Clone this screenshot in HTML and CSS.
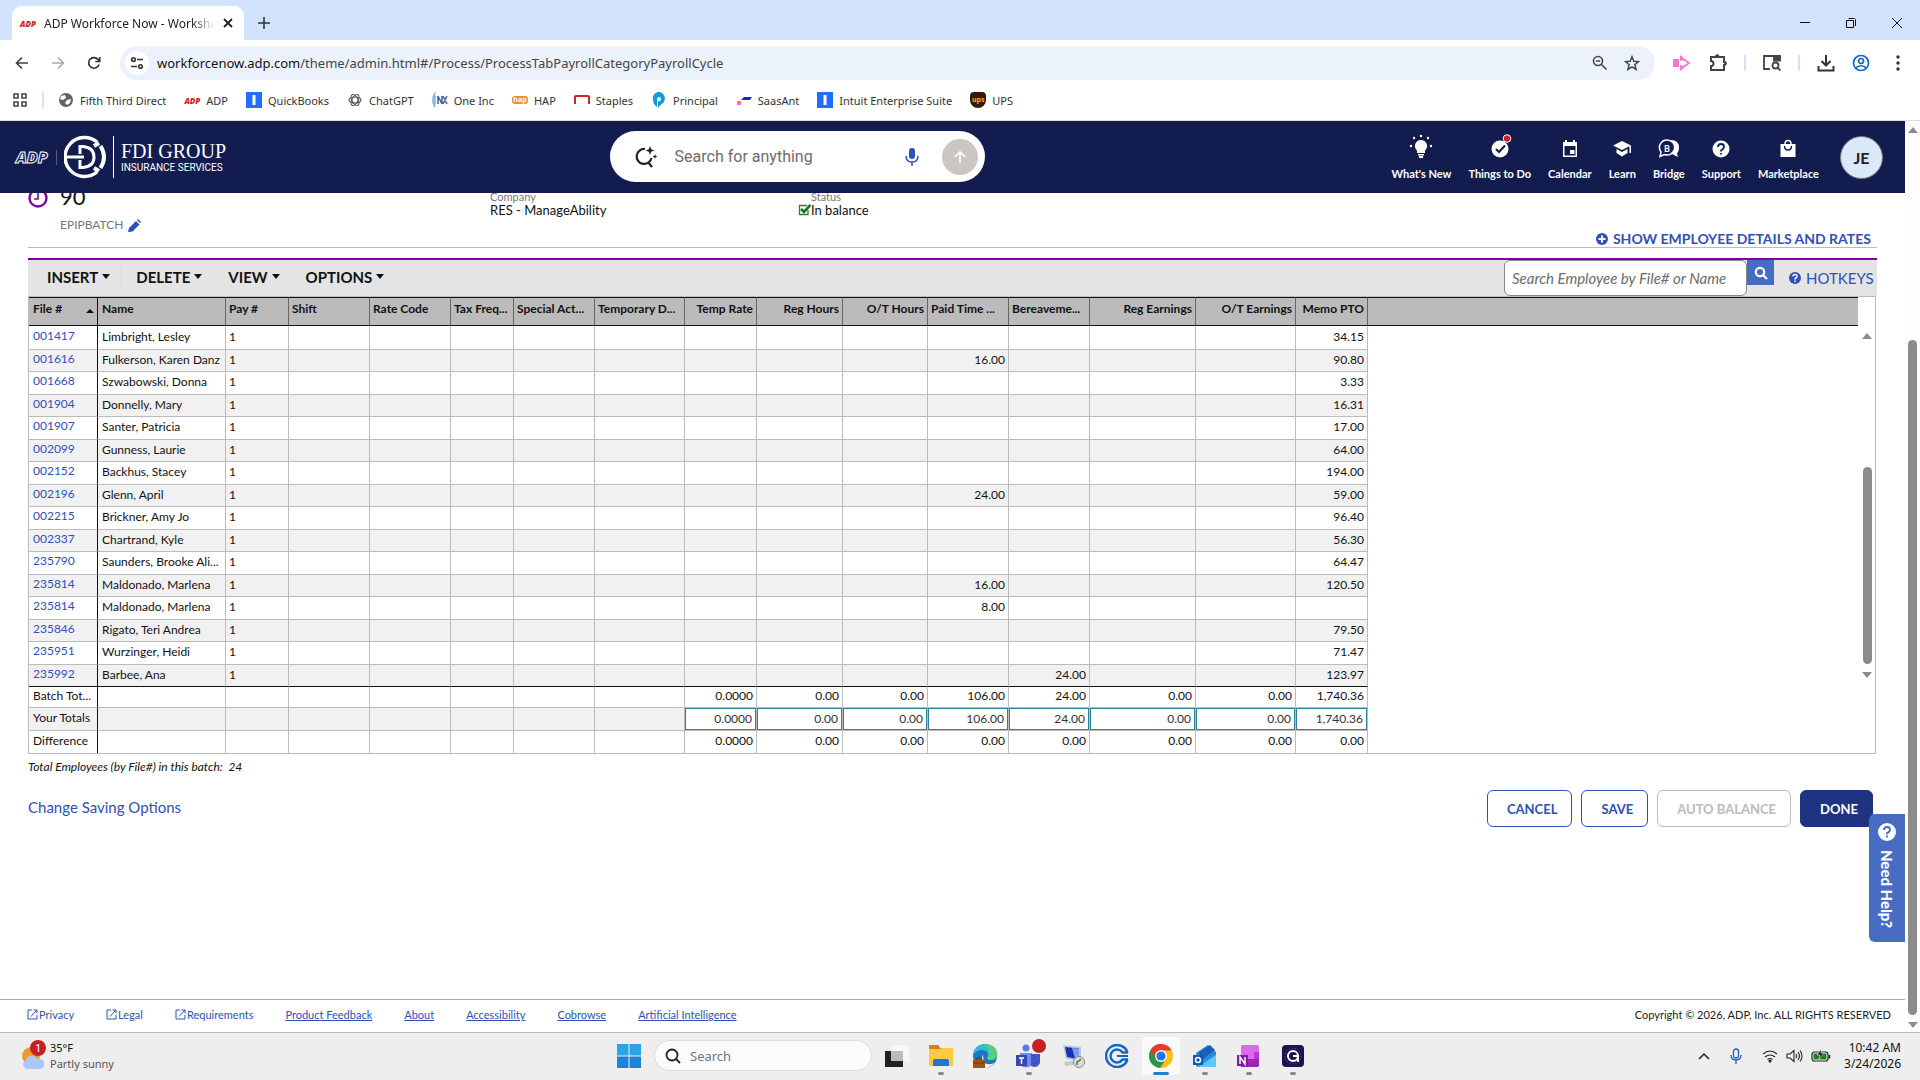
FILE: index.html
```html
<!DOCTYPE html>
<html lang="en">
<head>
<meta charset="utf-8">
<title>ADP Workforce Now - Worksheet</title>
<link rel="stylesheet" href="styles.css">
</head>
<body>
<div class="tabs">
  <div class="tab">
    <span class="adp-mark">ADP</span>
    <span class="tab-title">ADP Workforce Now - Worksheet</span>
    <button class="plain" aria-label="Close tab"><svg width="10" height="10" viewBox="0 0 10 10"><path d="M1 1l8 8M9 1L1 9" stroke="#222" stroke-width="1.8"/></svg></button>
  </div>
  <button class="plain new-tab" aria-label="New tab"><svg width="12" height="12" viewBox="0 0 12 12"><path d="M6 0v12M0 6h12" stroke="#333" stroke-width="1.6"/></svg></button>
  <div class="window-controls">
    <button class="plain" aria-label="Minimize"><svg width="12" height="12" viewBox="0 0 12 12"><path d="M1 5.500h10" stroke="#111"/></svg></button>
    <button class="plain" aria-label="Restore"><svg width="12" height="12" viewBox="0 0 12 12"><path d="M1.500 3.500h7v7h-7zM3.500 1.500h6l1 1v6.500" stroke="#111" fill="none"/></svg></button>
    <button class="plain" aria-label="Close"><svg width="12" height="12" viewBox="0 0 12 12"><path d="M1 1l10 10M11 1L1 11" stroke="#111"/></svg></button>
  </div>
</div>

<div class="toolbar">
  <div class="nav-buttons">
    <button class="plain" aria-label="Back"><svg width="14" height="14" viewBox="0 0 14 14"><path d="M13 7H2M7 1.500L1.500 7 7 12.500" fill="none" stroke="#444" stroke-width="1.700"/></svg></button>
    <button class="plain" aria-label="Forward"><svg width="14" height="14" viewBox="0 0 14 14"><path d="M1 7h11M7 1.500L12.500 7 7 12.500" fill="none" stroke="#aaa" stroke-width="1.500"/></svg></button>
    <button class="plain" aria-label="Reload"><svg width="14" height="14" viewBox="0 0 14 14"><path d="M12 8.500A5.300 5.300 0 1 1 11 3.500L12.500 5M12.700 1v4.500H8.300" fill="none" stroke="#333" stroke-width="1.700"/></svg></button>
  </div>
  <div class="address">
    <span class="site-info"><svg width="14" height="14" viewBox="0 0 14 14" fill="none" stroke="#333" stroke-width="1.600"><circle cx="3.500" cy="3.500" r="1.800"/><path d="M7 3.500h6M1 10.500h6"/><circle cx="10.500" cy="10.500" r="1.800"/></svg></span>
    <span class="url"><b>workforcenow.adp.com</b>/theme/admin.html#/Process/ProcessTabPayrollCategoryPayrollCycle</span>
    <svg width="16" height="16" viewBox="0 0 16 16" fill="none" stroke="#444" stroke-width="1.600"><circle cx="6" cy="6" r="4.500"/><path d="M9.500 9.500l5 5M4 6h4"/></svg>
    <svg width="16" height="16" viewBox="0 0 16 16" fill="none" stroke="#444" stroke-width="1.500"><path d="M8 1.800l1.800 4.400 4.700.4-3.600 3.100 1.100 4.600L8 11.800l-4 2.500 1.100-4.600L1.500 6.600l4.700-.4z"/></svg>
  </div>
  <div class="extensions">
    <svg class="ext-pink" width="18" height="16" viewBox="0 0 18 16"><path d="M0 4h6v8H0zM7 0l4 3-4 3zM7 10l4 3-4 3z" fill="#ff75c3"/><path d="M7 4.500h4l5 3.500-5 3.500H7" fill="none" stroke="#ff75c3" stroke-width="1.800"/></svg>
    <svg width="18" height="18" viewBox="0 0 18 18"><path d="M2 3h13v5a1.500 1.500 0 0 1 0 3v5H2v-4a2.500 2.500 0 0 0 0-5z" fill="none" stroke="#444" stroke-width="2"/><path d="M6 2.500a2.200 2.200 0 0 1 4.400 0zM15.500 7a2 2 0 0 1 0 4.500z" fill="#444"/></svg>
    <i class="bar"></i>
    <svg width="18" height="18" viewBox="0 0 18 18" fill="none" stroke="#444" stroke-width="1.800"><path d="M7 15H1V2h16v5"/><path d="M11 3.500h6v3h-6z" fill="#444"/><circle cx="12.500" cy="11.500" r="3"/><path d="M14.500 13.500l3 3"/></svg>
    <i class="bar"></i>
    <svg width="18" height="18" viewBox="0 0 18 18" fill="none" stroke="#333" stroke-width="2"><path d="M9 1v10M4.500 7L9 11.500 13.500 7M1.500 12v4.500h15V12"/></svg>
    <svg width="18" height="18" viewBox="0 0 18 18" fill="none" stroke="#1565c0" stroke-width="1.700"><circle cx="9" cy="9" r="7.500"/><circle cx="9" cy="7" r="2.500"/><path d="M4 14c2-3 8-3 10 0"/></svg>
    <svg class="menu-dots" width="4" height="16" viewBox="0 0 4 16" fill="#333"><circle cx="2" cy="2" r="1.700"/><circle cx="2" cy="8" r="1.700"/><circle cx="2" cy="14" r="1.700"/></svg>
  </div>
</div>

<nav class="bookmarks">
  <svg class="apps" width="14" height="14" viewBox="0 0 14 14" fill="none" stroke="#444" stroke-width="1.600"><path d="M1 1h4v4H1zM9 1h4v4H9zM1 9h4v4H1zM9 9h4v4H9z"/></svg>
  <i class="bar"></i>
  <a href="#"><svg width="16" height="16" viewBox="0 0 16 16"><circle cx="8" cy="8" r="7" fill="#5f6368"/><path d="M3 4l4-1 1 3-3 2-3-1zM9 8l4-1-1 4-3 2-2-2z" fill="#fff"/></svg>Fifth Third Direct</a>
  <a href="#"><span class="adp-mark">ADP</span>ADP</a>
  <a href="#"><svg width="16" height="16" viewBox="0 0 16 16"><path d="M0 0h16v16H0z" fill="#236cff"/><path d="M6.500 3h3v10h-3z" fill="#fff"/></svg>QuickBooks</a>
  <a href="#"><svg width="16" height="16" viewBox="0 0 16 16" fill="none" stroke="#555" stroke-width="1.200"><ellipse cx="8" cy="8" rx="6" ry="3"/><ellipse cx="8" cy="8" rx="6" ry="3" transform="rotate(60 8 8)"/><ellipse cx="8" cy="8" rx="6" ry="3" transform="rotate(120 8 8)"/></svg>ChatGPT</a>
  <a href="#"><svg width="16" height="16" viewBox="0 0 16 16" fill="none" stroke-width="1.600"><path d="M3 1C0 6 0 10 3 15M3 4v8" stroke="#6db5e3"/><path d="M6 12V4l4 8V4M11 4l4 8M15 4l-4 8" stroke="#4a6a9a"/></svg>One Inc</a>
  <a href="#"><span class="hap-mark">hap</span>HAP</a>
  <a href="#"><svg width="16" height="16" viewBox="0 0 16 16" fill="none" stroke="#d2232a" stroke-width="2"><path d="M1 12V5q0-1 1-1h12q1 0 1 1v7"/></svg>Staples</a>
  <a href="#"><svg width="16" height="16" viewBox="0 0 16 16"><path d="M2 8a6 6.500 0 1 1 8 4.500L7 16V9q3 1 3-2a2 2 0 0 0-4 0v8Q2 12 2 8z" fill="#1499dc"/></svg>Principal</a>
  <a href="#"><svg width="16" height="16" viewBox="0 0 16 16"><path d="M1 9h4v4H1z" fill="#ff6fc0"/><path d="M5 8l3-3h8l-2 3z" fill="#1726c9"/></svg>SaasAnt</a>
  <a href="#"><svg width="16" height="16" viewBox="0 0 16 16"><path d="M0 0h16v16H0z" fill="#236cff"/><path d="M6.500 3h3v10h-3z" fill="#fff"/></svg>Intuit Enterprise Suite</a>
  <a href="#"><span class="ups-mark">ups</span>UPS</a>
</nav>

<div class="viewport">
<div class="app">
  <header class="header">
    <span class="adp-logo">ADP</span>
    <i class="logo-divider"></i>
    <svg class="fdi-mark" width="44" height="44" viewBox="0 0 44 44" fill="none" stroke="#fff"><path d="M33 7A19.500 19.500 0 1 0 33 37" stroke-width="3.500"/><path d="M30 33l5 3M30 11l5-3" stroke-width="4"/><path d="M36.500 11q7 11 0 22" stroke-width="4"/><path d="M2 22h18" stroke-width="3"/><path d="M16 19v-7.500h3q11 1 11 10.500t-11 10.500h-3V25" stroke-width="3"/></svg>
    <div class="fdi-text"><strong>FDI GROUP</strong><small>INSURANCE SERVICES</small></div>
    <form class="ask">
      <svg width="24" height="24" viewBox="0 0 24 24" fill="none" stroke="#222" stroke-width="2.200"><path d="M11 4A7.500 7.500 0 1 0 17.500 13M14 17l4 5"/><path d="M16 1l1.200 3.300L20.500 5.500l-3.300 1.200L16 10l-1.200-3.300-3.300-1.200 3.300-1.200zM21 9l.7 1.800 1.800.7-1.800.7-.7 1.800-.7-1.800-1.800-.7 1.800-.7z" fill="#222" stroke="none"/></svg>
      <input type="text" aria-label="Search for anything" placeholder="Search for anything">
      <svg width="14" height="18" viewBox="0 0 14 18"><rect x="4" y="0" width="6" height="11" rx="3" fill="#2f51b5"/><path d="M1 8q0 6 6 6t6-6M7 14v4" fill="none" stroke="#2f51b5" stroke-width="1.500"/></svg>
      <button type="button" aria-label="Send"><svg width="14" height="14" viewBox="0 0 14 14" fill="none" stroke="#fff" stroke-width="1.600"><path d="M7 13V2M2 7l5-5 5 5"/></svg></button>
    </form>
    <nav class="shortcuts">
      <a href="#"><svg width="26" height="26" viewBox="0 0 26 26" fill="#fff"><path d="M13 6a6 6 0 0 1 4 10.500V19H9v-2.500A6 6 0 0 1 13 6zM10 20h6v1.500h-6zM11 22h4v2h-4z"/><circle cx="13" cy="2" r="1.200"/><circle cx="6" cy="4" r="1.200"/><circle cx="20" cy="4" r="1.200"/><circle cx="3" cy="12" r="1.200"/><circle cx="23" cy="12" r="1.200"/></svg>What's New</a>
      <a href="#"><svg width="26" height="26" viewBox="0 0 26 26"><circle cx="13" cy="15" r="8.500" fill="#fff"/><path d="M9 15l3 3 6-6.500" fill="none" stroke="#131c4e" stroke-width="2"/><circle cx="20" cy="4.500" r="3.800" fill="#d0222a" stroke="#fff"/></svg>Things to Do</a>
      <a href="#"><svg width="26" height="26" viewBox="0 0 26 26"><path d="M6 8h14v15H6zM8 6h2v3H8zM16 6h2v3h-2z" fill="#fff"/><path d="M7.500 12h11v9.500h-11z" fill="#131c4e"/><path d="M13 16h4.500v4H13z" fill="#fff"/></svg>Calendar</a>
      <a href="#"><svg width="26" height="26" viewBox="0 0 26 26" fill="#fff"><path d="M13 7l9 4.500-9 4.500-9-4.500zM7.500 15l5.500 3 5.500-3v4L13 22.500 7.500 19zM20.500 12h1.500v7h-1.500z"/></svg>Learn</a>
      <a href="#"><svg width="26" height="26" viewBox="0 0 26 26"><path d="M15 6q8 0 8 8 0 4-2 5.500l1 3.500-6-3z" fill="#fff"/><path d="M11.500 6a7.500 7.500 0 1 1-3 14.500L4 22.500l1-4.500a7.500 7.500 0 0 1 6.500-12z" fill="#131c4e" stroke="#fff" stroke-width="1.500"/><text x="8" y="18" class="bridge-letter">B</text></svg>Bridge</a>
      <a href="#"><svg width="26" height="26" viewBox="0 0 26 26"><circle cx="13" cy="15" r="8.500" fill="#fff"/><path d="M10 13q0-3 3-3t3 2.500-3 4v1M13 19v1.500" fill="none" stroke="#131c4e" stroke-width="1.800"/></svg>Support</a>
      <a href="#"><svg width="26" height="26" viewBox="0 0 26 26"><path d="M5.500 10h15v13h-15z" fill="#fff"/><path d="M10 10q0-3.500 3-3.500t3 3.500" fill="none" stroke="#fff" stroke-width="1.500"/><path d="M9.500 12q0 4 3.500 4t3.500-4" fill="none" stroke="#131c4e" stroke-width="1.500"/></svg>Marketplace</a>
    </nav>
    <button class="avatar">JE</button>
  </header>

  <main class="content">
    <section class="batch">
      <div class="batch-id">
        <svg width="20" height="20" viewBox="0 0 20 20" fill="none" stroke="#7a0a9c" stroke-width="2.400"><circle cx="10" cy="10" r="8.500"/><path d="M10 4v7H6" stroke-width="1.600"/></svg>
        <h1>90</h1>
        <p>EPIPBATCH <svg width="13" height="13" viewBox="0 0 13 13"><path d="M0 13l1-4 7-7 3.500 3.500-7 7zM9 1l1-1 3 3-1 1z" fill="#2f51b5"/></svg></p>
      </div>
      <div class="fact company"><span>Company</span>RES - ManageAbility</div>
      <div class="fact status"><span>Status</span><div><svg width="13" height="13" viewBox="0 0 13 13" fill="none"><path d="M10 7v4.500H1.500v-9H9" stroke="#2e7d32" stroke-width="1.300"/><path d="M3 6l3 3 6.500-7" stroke="#0a7d18" stroke-width="2.600"/></svg>In balance</div></div>
      <a href="#" class="details"><svg width="12" height="12" viewBox="0 0 12 12"><circle cx="6" cy="6" r="6" fill="#2f51b5"/><path d="M6 2.500v7M2.500 6h7" stroke="#fff" stroke-width="2"/></svg>SHOW EMPLOYEE DETAILS AND RATES</a>
    </section>

    <div class="actions">
      <button>INSERT</button><button>DELETE</button><button>VIEW</button><button>OPTIONS</button>
      <form class="find">
        <input type="text" aria-label="Search employee" placeholder="Search Employee by File# or Name">
        <button type="button" aria-label="Search"><svg width="14" height="14" viewBox="0 0 14 14" fill="none" stroke="#fff" stroke-width="2.200"><circle cx="6" cy="6" r="4.200"/><path d="M9 9l4 4"/></svg></button>
      </form>
      <a href="#" class="hotkeys"><svg width="12" height="12" viewBox="0 0 12 12"><circle cx="6" cy="6" r="6" fill="#2f51b5"/><path d="M4 4.500q0-2 2-2t2 1.800-2 2.200v1M6 8.500V10" fill="none" stroke="#fff" stroke-width="1.400"/></svg>HOTKEYS</a>
    </div>

    <div class="grid">
      <table>
        <colgroup><col class="w69"><col class="w128"><col class="w63"><col class="w81"><col class="w81"><col class="w63"><col class="w81"><col class="w90"><col class="w72"><col class="w86"><col class="w85"><col class="w81"><col class="w81"><col class="w106"><col class="w100"><col class="w72"><col></colgroup>
        <thead><tr><th class="sorted">File #</th><th>Name</th><th>Pay #</th><th>Shift</th><th>Rate Code</th><th>Tax Freq...</th><th>Special Act...</th><th>Temporary D...</th><th>Temp Rate</th><th>Reg Hours</th><th>O/T Hours</th><th class="lead">Paid Time ...</th><th class="lead">Bereaveme...</th><th>Reg Earnings</th><th>O/T Earnings</th><th>Memo PTO</th><th></th></tr></thead>
        <tbody>
          <tr><td><a href="#">001417</a><td>Limbright, Lesley<td>1<td><td><td><td><td><td><td><td><td><td><td><td><td>34.15<td></tr>
          <tr><td><a href="#">001616</a><td>Fulkerson, Karen Danz<td>1<td><td><td><td><td><td><td><td><td>16.00<td><td><td><td>90.80<td></tr>
          <tr><td><a href="#">001668</a><td>Szwabowski, Donna<td>1<td><td><td><td><td><td><td><td><td><td><td><td><td>3.33<td></tr>
          <tr><td><a href="#">001904</a><td>Donnelly, Mary<td>1<td><td><td><td><td><td><td><td><td><td><td><td><td>16.31<td></tr>
          <tr><td><a href="#">001907</a><td>Santer, Patricia<td>1<td><td><td><td><td><td><td><td><td><td><td><td><td>17.00<td></tr>
          <tr><td><a href="#">002099</a><td>Gunness, Laurie<td>1<td><td><td><td><td><td><td><td><td><td><td><td><td>64.00<td></tr>
          <tr><td><a href="#">002152</a><td>Backhus, Stacey<td>1<td><td><td><td><td><td><td><td><td><td><td><td><td>194.00<td></tr>
          <tr><td><a href="#">002196</a><td>Glenn, April<td>1<td><td><td><td><td><td><td><td><td>24.00<td><td><td><td>59.00<td></tr>
          <tr><td><a href="#">002215</a><td>Brickner, Amy Jo<td>1<td><td><td><td><td><td><td><td><td><td><td><td><td>96.40<td></tr>
          <tr><td><a href="#">002337</a><td>Chartrand, Kyle<td>1<td><td><td><td><td><td><td><td><td><td><td><td><td>56.30<td></tr>
          <tr><td><a href="#">235790</a><td>Saunders, Brooke Ali...<td>1<td><td><td><td><td><td><td><td><td><td><td><td><td>64.47<td></tr>
          <tr><td><a href="#">235814</a><td>Maldonado, Marlena<td>1<td><td><td><td><td><td><td><td><td>16.00<td><td><td><td>120.50<td></tr>
          <tr><td><a href="#">235814</a><td>Maldonado, Marlena<td>1<td><td><td><td><td><td><td><td><td>8.00<td><td><td><td><td></tr>
          <tr><td><a href="#">235846</a><td>Rigato, Teri Andrea<td>1<td><td><td><td><td><td><td><td><td><td><td><td><td>79.50<td></tr>
          <tr><td><a href="#">235951</a><td>Wurzinger, Heidi<td>1<td><td><td><td><td><td><td><td><td><td><td><td><td>71.47<td></tr>
          <tr><td><a href="#">235992</a><td>Barbee, Ana<td>1<td><td><td><td><td><td><td><td><td><td>24.00<td><td><td>123.97<td></tr>
        </tbody>
        <tfoot>
          <tr><td>Batch Tot...<td><td><td><td><td><td><td><td>0.0000<td>0.00<td>0.00<td>106.00<td>24.00<td>0.00<td>0.00<td>1,740.36<td></tr>
          <tr class="yours"><td>Your Totals<td><td><td><td><td><td><td><td><input aria-label="Temp Rate total" value="0.0000"><td><input aria-label="Reg Hours total" value="0.00"><td><input aria-label="O/T Hours total" value="0.00"><td><input aria-label="Paid Time Off total" value="106.00"><td><input aria-label="Bereavement total" value="24.00"><td><input aria-label="Reg Earnings total" value="0.00"><td><input aria-label="O/T Earnings total" value="0.00"><td><input aria-label="Memo PTO total" value="1,740.36"><td></tr>
          <tr><td>Difference<td><td><td><td><td><td><td><td>0.0000<td>0.00<td>0.00<td>0.00<td>0.00<td>0.00<td>0.00<td>0.00<td></tr>
        </tfoot>
      </table>
      <div class="grid-scroll"><i class="up"></i><i class="track"></i><i class="thumb"></i><i class="down"></i></div>
    </div>
    <p class="count">Total Employees (by File#) in this batch:&nbsp; 24</p>

    <div class="bottom">
      <a href="#">Change Saving Options</a>
      <div class="buttons">
        <button>CANCEL</button><button>SAVE</button><button disabled>AUTO BALANCE</button><button class="primary">DONE</button>
      </div>
    </div>
  </main>

  <button class="need-help"><svg width="18" height="18" viewBox="0 0 18 18"><circle cx="9" cy="9" r="9" fill="#fff"/><path d="M6 7q0-3 3-3t3 2.500-3 3.500v1.500M9 12.500v2" fill="none" stroke="#486bc3" stroke-width="1.800"/></svg><span>Need Help?</span></button>

  <footer class="footer">
    <a href="#"><svg width="11" height="11" viewBox="0 0 11 11"><path d="M5 1H1v9h9V6M6.500 1H10v3.500M10 1L4 7.500" fill="none" stroke="#2f51b5"/></svg>Privacy</a>
    <a href="#"><svg width="11" height="11" viewBox="0 0 11 11"><path d="M5 1H1v9h9V6M6.500 1H10v3.500M10 1L4 7.500" fill="none" stroke="#2f51b5"/></svg>Legal</a>
    <a href="#"><svg width="11" height="11" viewBox="0 0 11 11"><path d="M5 1H1v9h9V6M6.500 1H10v3.500M10 1L4 7.500" fill="none" stroke="#2f51b5"/></svg>Requirements</a>
    <a href="#" class="line">Product Feedback</a>
    <a href="#" class="line">About</a>
    <a href="#" class="line">Accessibility</a>
    <a href="#" class="line">Cobrowse</a>
    <a href="#" class="line">Artificial Intelligence</a>
    <span>Copyright © 2026, ADP, Inc. ALL RIGHTS RESERVED</span>
  </footer>
</div>
<div class="page-scroll"><i class="up"></i><i class="track"></i><i class="thumb"></i><i class="down"></i></div>
</div>

<div class="taskbar">
  <div class="weather">
    <svg width="28" height="32" viewBox="0 0 28 32"><circle cx="11" cy="16" r="9" fill="#f0982a"/><path d="M6 29a5 5 0 0 1 0-9 6 6 0 0 1 11-1 5 5 0 0 1 4 10z" fill="#a9c8f5"/><circle cx="18" cy="8" r="8" fill="#c42126"/><text x="15" y="12">1</text></svg>
    <p>35°F<span>Partly sunny</span></p>
  </div>
  <div class="dock">
    <svg class="start" width="24" height="24" viewBox="0 0 24 24"><path d="M0 0h11.500v11.500H0zM12.500 0H24v11.500H12.500z" fill="#2ba3e6"/><path d="M0 12.500h11.500V24H0zM12.500 12.500H24V24H12.500z" fill="#1c84d8"/></svg>
    <label class="find-app"><svg width="16" height="16" viewBox="0 0 16 16" fill="none" stroke="#222" stroke-width="1.800"><circle cx="7" cy="7" r="5.500"/><path d="M11 11l4 4"/></svg><input type="text" aria-label="Search" placeholder="Search"></label>
    <div class="app-icons">
      <button class="plain" aria-label="Task view"><svg width="24" height="24" viewBox="0 0 24 24"><path d="M0 7h18v16H0z" fill="#222"/><path d="M6 1h18v16H6z" fill="#f8f8f8"/><path d="M6 7h12v10H6z" fill="#bbb"/></svg></button>
      <button class="plain open" aria-label="File Explorer"><svg width="24" height="24" viewBox="0 0 24 24"><path d="M0 1h10v6H0z" fill="#e08a1c"/><path d="M0 4h24v18H0z" fill="#fdc943"/><path d="M0 1h9l3 4H0z" fill="#d98016"/><path d="M4 22v-5q0-2 2-2h12q2 0 2 2v5z" fill="#1b79cf"/></svg></button>
      <button class="plain" aria-label="Edge"><svg width="24" height="24" viewBox="0 0 24 24"><circle cx="12" cy="12" r="12" fill="#1b76c4"/><path d="M0 11Q1 1 12 0q11 0 12 10 0 6-7 6-4-1-2-4 1-6-6-6-5 0-9 5z" fill="#35b8e0"/><path d="M14 0q10 2 10 10 0 6-7 6-4-1-2-4 4-7-4-10z" fill="#55d07c"/><path d="M10 10q-3 8 4 10 5 1 8-2-4 6-11 6z" fill="#eef6fb"/><path d="M0 16h12v8H0z" fill="#a0561a"/><path d="M4 16v-2h4v2M0 19h12" stroke="#6b3408" fill="none"/></svg></button>
      <button class="plain open teams" aria-label="Teams"><svg width="26" height="26" viewBox="0 0 26 26"><circle cx="10" cy="5" r="3.500" fill="#5b7be8"/><path d="M4 10h12v12q-6 5-12 0z" fill="#6e8cf0"/><path d="M15 11h9v9q-3 6-9 3z" fill="#4255c8"/><path d="M0 12h11v11H0z" fill="#3949ab"/><path d="M3 15h5M5.500 15v6" stroke="#fff" stroke-width="1.400"/></svg><b></b></button>
      <button class="plain" aria-label="Remote Desktop"><svg width="24" height="24" viewBox="0 0 24 24"><path d="M2 1l18 2v14L5 15z" fill="#b9c7dc"/><path d="M4 3l14 1.500v11L6 13z" fill="#1733b8"/><path d="M11 4l7 .5v11l-4-1z" fill="#7d9be8"/><path d="M3 18l9-1 1 4-9 1z" fill="#c8c8c8"/><circle cx="18" cy="18" r="5.500" fill="#ddd" stroke="#888"/><path d="M16 21v-3l2-1 2-2" stroke="#2e8b3a" stroke-width="1.500" fill="none"/></svg></button>
      <button class="plain" aria-label="CCH"><svg width="24" height="24" viewBox="0 0 24 24" fill="none" stroke="#1666c0" stroke-width="2.400"><path d="M22.500 8.500A11 11 0 1 0 22.500 15.500M17.500 8.500A6.500 6.500 0 1 0 17.500 15.500M17 8.500h6M17 15.500h6"/><path d="M23 12H13a2 2 0 0 1 0-1" stroke-width="2"/></svg></button>
      <button class="plain open active" aria-label="Chrome"><svg width="24" height="24" viewBox="0 0 24 24"><circle cx="12" cy="12" r="12" fill="#fbc116"/><path d="M12 12L1.600 6A12 12 0 0 0 11 24l6-9z" fill="#279847"/><path d="M12 6.500h10.600A12 12 0 0 0 1.600 6l5.200 9z" fill="#e33b2e"/><circle cx="12" cy="12" r="6" fill="#fff"/><circle cx="12" cy="12" r="4.600" fill="#2b74e8"/></svg></button>
      <button class="plain open" aria-label="Outlook"><svg width="24" height="24" viewBox="0 0 24 24"><path d="M3 9L15 1l8 7v13q0 2-2 2H5q-2 0-2-2z" fill="#2a8be0"/><path d="M5 9L17 1l5 5L10 15z" fill="#1c5fb8"/><path d="M5 23l18-12v10q0 2-2 2z" fill="#5cc8f5"/><path d="M0 11h10v10H0z" fill="#1257a8"/><circle cx="5" cy="16" r="2.500" fill="none" stroke="#fff" stroke-width="1.500"/></svg></button>
      <button class="plain open" aria-label="OneNote"><svg width="24" height="24" viewBox="0 0 24 24"><rect x="4" y="1" width="18" height="22" rx="2" fill="#d86bf0"/><path d="M17 8h5v7h-5z" fill="#b43bd6"/><path d="M4 15h18v6q0 2-2 2H4z" fill="#9c27b0"/><path d="M0 11h11v11H0z" fill="#7b1fa2"/><path d="M3 20v-7l5 7v-7" stroke="#fff" stroke-width="1.400" fill="none"/></svg></button>
      <button class="plain open" aria-label="Assistant"><svg width="22" height="22" viewBox="0 0 22 22"><rect width="22" height="22" rx="4" fill="#1f1250"/><circle cx="11" cy="11" r="8" fill="none" stroke="#6f5cc4" stroke-dasharray="1 2"/><circle cx="11" cy="11" r="5" fill="none" stroke="#fff" stroke-width="2"/><path d="M11 11h5v6" stroke="#fff" stroke-width="2" fill="none"/></svg></button>
    </div>
  </div>
  <div class="tray">
    <svg width="12" height="12" viewBox="0 0 12 12" fill="none" stroke="#222" stroke-width="1.500"><path d="M1 9l5-5 5 5"/></svg>
    <svg width="12" height="16" viewBox="0 0 12 16" fill="none" stroke="#1f5fb4" stroke-width="1.300"><rect x="3.500" y="1" width="5" height="9" rx="2.500"/><path d="M1 7q0 5 5 5t5-5M6 12v4"/></svg>
    <div class="status-icons">
      <svg width="16" height="14" viewBox="0 0 16 14" fill="none" stroke="#222" stroke-width="1.200"><path d="M1 5q7-6 14 0M3 8q5-4 10 0M5.500 10.500q2.500-2 5 0"/><circle cx="8" cy="12" r="1" fill="#222"/></svg>
      <svg width="17" height="14" viewBox="0 0 17 14" fill="none" stroke="#222" stroke-width="1.100"><path d="M1 5h3l4-3.500v11L4 9H1zM10 5q1.500 2 0 4M12 3q3 4 0 8M14 1.500q4 5.500 0 11"/></svg>
      <svg width="20" height="14" viewBox="0 0 20 14"><rect x="1" y="3" width="16" height="9" rx="2.500" fill="#fff" stroke="#222" stroke-width="1.200"/><path d="M2.500 4.500h13v6h-13z" fill="#14851a"/><path d="M18.500 6v3.500" stroke="#222" stroke-width="1.500"/><path d="M10 0L6 6h3l-1 4 5-6h-3z" fill="#222" stroke="#eee" stroke-width=".6"/></svg>
    </div>
    <p>10:42 AM<span>3/24/2026</span></p>
  </div>
</div>
</body>
</html>
```
FILE: styles.css
```css
* { box-sizing: border-box; }
body { margin: 0; height: 100vh; display: flex; flex-direction: column; overflow: hidden; font-family: Lato, "Liberation Sans", sans-serif; background: #fff; color: #111; }
h1, p { margin: 0; font-weight: 400; }
a { color: #2f51b5; text-decoration: none; }
button, input { font: inherit; margin: 0; }
svg { display: block; flex: none; }
.plain { border: 0; padding: 0; background: none; display: flex; align-items: center; justify-content: center; }

/* Browser frame */
.tabs, .toolbar, .bookmarks, .taskbar { font-family: "Noto Sans", sans-serif; flex: none; }
.tabs { height: 40px; background: #d3e2fd; display: flex; align-items: center; padding: 6px 17px 0 12px; }
.tab { width: 232px; height: 34px; background: #fff; border-radius: 10px 10px 0 0; display: flex; align-items: center; gap: 8px; padding: 0 11px 0 8px; font-size: 12px; color: #222; }
.tab-title { flex: 1; overflow: hidden; white-space: nowrap; mask-image: linear-gradient(90deg, #000 86%, transparent); }
.new-tab { margin-left: 14px; }
.window-controls { margin-left: auto; display: flex; gap: 34px; }
.adp-mark { font: italic 900 8px "Open Sans", sans-serif; color: #d0271d; width: 16px; text-align: center; }

.toolbar { height: 40px; display: flex; align-items: flex-end; }
.nav-buttons { width: 120px; height: 34px; display: flex; align-items: center; gap: 22px; padding-left: 15px; }
.address { flex: 1; height: 34px; border-radius: 17px; background: #ecf2fb; display: flex; align-items: center; gap: 16px; padding: 0 15px 0 5px; }
.site-info { width: 24px; height: 24px; border-radius: 12px; background: #fff; display: flex; align-items: center; justify-content: center; }
.url { flex: 1; font-size: 13px; color: #444; margin-left: -8px; }
.url b { font-weight: 400; color: #111; }
.extensions { height: 34px; width: 265px; display: flex; align-items: center; gap: 17px; padding: 0 20px 0 18px; }
.ext-pink { margin-right: 1px; }
.menu-dots { margin-left: auto; }
.bar { width: 2px; height: 16px; background: #d3e2fd; flex: none; }

.bookmarks { height: 41px; border-bottom: 1px solid #ddd; display: flex; align-items: center; gap: 18px; padding-left: 13px; font-size: 11px; }
.bookmarks .bar { margin-left: -3px; margin-right: -4px; }
.bookmarks a { color: #333; display: flex; align-items: center; gap: 6px; white-space: nowrap; }
.hap-mark { width: 16px; border-radius: 3px; background: #e8912d; color: #fff; font: bold 7px/8px "Open Sans", sans-serif; text-align: center; }
.ups-mark { width: 16px; height: 16px; border-radius: 4px 4px 8px 8px; background: #35190a; color: #ffb406; font: bold 7px/15px "Open Sans", sans-serif; text-align: center; }

/* Application */
.viewport { flex: 1; min-height: 0; display: flex; }
.app { flex: 1; min-width: 0; display: flex; flex-direction: column; position: relative; }
.header { height: 72px; flex: none; background: #131c4e; color: #fff; display: flex; align-items: center; padding: 0 22px 0 16px; position: relative; }
.adp-logo { font: italic 900 16px "Open Sans", sans-serif; width: 32px; color: #131c4e; -webkit-text-stroke: 1px #fff; }
.logo-divider { width: 1px; height: 15px; background: #555d85; margin: 0 7px 0 8px; }
.fdi-text { margin-left: 5px; padding-left: 7px; border-left: 1px solid #fff; height: 42px; display: flex; flex-direction: column; justify-content: center; }
.fdi-text strong { font: 400 20px/21px "Liberation Serif", serif; }
.fdi-text small { font: 400 10px/12px Roboto, sans-serif; }
.ask { position: absolute; left: 32%; top: 10px; width: 375px; height: 51px; border-radius: 26px; background: #fff; display: flex; align-items: center; padding: 0 7px 0 24px; }
.ask input { flex: 1; min-width: 0; border: 0; outline: 0; background: none; font: 16px Roboto, sans-serif; padding: 0 0 0 17px; }
.ask input::placeholder { color: #6c6c6c; }
.ask button { width: 36px; height: 36px; margin-left: 23px; border: 0; padding: 0; border-radius: 18px; background: #cac6c2; display: flex; align-items: center; justify-content: center; }
.shortcuts { margin-left: auto; display: flex; gap: 17px; }
.shortcuts a { color: #fff; font-size: 11px; line-height: 14px; font-weight: 700; display: flex; flex-direction: column; align-items: center; gap: 7px; }
.bridge-letter { font: bold 9px Lato, sans-serif; fill: #fff; }
.avatar { width: 43px; height: 43px; margin-left: 21px; border-radius: 22px; border: 1px solid #777; background: #dbe8f9; color: #222; font-size: 16px; font-weight: 700; padding: 0; }

.content { flex: 1; padding: 0 28px; overflow: hidden; }
.batch { height: 55px; border-bottom: 1px solid #bbb; display: flex; }
.batch-id { width: 462px; display: grid; grid-template-columns: 20px auto; column-gap: 12px; align-content: start; overflow: hidden; }
.batch-id > svg { margin-top: -5px; }
.batch-id h1 { margin-top: -9px; font-size: 22px; line-height: 26px; }
.batch-id p { grid-column: 2; margin-top: 7px; font-size: 12px; line-height: 16px; color: #777; display: flex; gap: 4px; }
.batch-id p svg { margin-top: 2px; }
.fact { font-size: 13px; line-height: 14px; }
.fact span { display: block; font-size: 11px; line-height: 12px; color: #777; margin-top: -2px; }
.company { width: 308px; }
.status span { padding-left: 13px; }
.status div { display: flex; }
.details { margin-left: auto; align-self: flex-end; display: flex; align-items: center; gap: 5px; font-weight: 700; font-size: 14px; line-height: 16px; padding-right: 6px; }

.actions { margin-top: 10px; height: 38px; border-top: 2px solid #8100a0; background: #e4e4e4; display: flex; align-items: flex-start; padding-left: 4px; }
.actions > button { height: 34px; border: 1px solid #dbe4e4; border-top: 0; background: none; padding: 0 10px 0 14px; font-size: 15px; font-weight: 700; color: #111; display: flex; align-items: center; gap: 4px; }
.actions > button::after { content: ""; border: 4px solid transparent; border-top: 5px solid #111; border-bottom: 0; }
.find { margin-left: auto; display: flex; align-items: flex-start; }
.find input { width: 243px; height: 36px; border: 1px solid #888; border-radius: 6px; background: #fff; padding: 0 7px; font-style: italic; font-size: 15px; }
.find input::placeholder { color: #6c6c6c; }
.find button { width: 27px; height: 25px; border: 0; padding: 0; background: #486bc3; display: flex; align-items: center; justify-content: center; }
.hotkeys { width: 103px; height: 36px; padding-left: 15px; display: flex; align-items: center; gap: 5px; font-size: 15px; }

.grid { border: 1px solid #bbb; display: flex; align-items: flex-start; margin-right: 1px; }
table { width: calc(100% - 17px); table-layout: fixed; border-collapse: separate; border-spacing: 0; font-size: 12px; line-height: 14px; }
.w63 { width: 63px; } .w69 { width: 69px; } .w72 { width: 72px; } .w81 { width: 81px; } .w85 { width: 85px; } .w86 { width: 86px; }
.w90 { width: 90px; } .w100 { width: 100px; } .w106 { width: 106px; } .w128 { width: 128px; }
th, td { padding: 0 3px; overflow: hidden; white-space: nowrap; text-align: left; border-right: 1px solid #bbb; border-bottom: 1px solid #bbb; vertical-align: middle; }
th { height: 29px; padding-bottom: 5px; background: #bbb; border-top: 1px solid #111; border-bottom-color: #111; border-right-color: #666; }
th:last-child { border-right: 0; }
th:first-child, td:first-child { border-right-color: #111; padding-left: 4px; }
th:nth-child(2), td:nth-child(2) { padding-left: 4px; padding-right: 0; }
th:nth-child(n+9), td:nth-child(n+9) { text-align: right; }
th.lead { text-align: left; }
.sorted { position: relative; }
.sorted::after { content: ""; position: absolute; right: 3px; top: 11px; border: 4px solid transparent; border-bottom-color: #111; border-top: 0; }
tbody td { padding-bottom: 2px; }
tbody tr:nth-child(odd) td { height: 23px; }
tbody tr:nth-child(even) td { height: 22px; background: #f1f1f1; }
tbody tr:first-child td { height: 24px; }
tbody td:first-child { padding-bottom: 4px; }
tbody tr:last-child td { border-bottom-color: #111; }
tbody tr td:last-child, tfoot tr td:last-child { border: 0; background: none !important; }
tfoot td { height: 22px; padding-bottom: 2px; }
tfoot tr:first-child td { height: 21px; }
tfoot tr:last-child td { border-bottom: 0; }
.yours td { height: 23px; background: #f1f1f1; }
.yours td:nth-child(n+9) { padding: 0; }
.yours input { display: block; width: 100%; height: 22px; border: 1px solid #2a8296; background: #fff; text-align: right; padding: 0 3px 2px; color: #333; }
.grid-scroll { width: 17px; height: 359px; margin-top: 30px; padding: 6px 4px 8px 5px; display: flex; flex-direction: column; align-items: center; }
.up { border: 5px solid transparent; border-bottom: 6px solid #8b8b8b; border-top: 0; }
.down { border: 5px solid transparent; border-top: 6px solid #8b8b8b; border-bottom: 0; }
.thumb { width: 9px; border-radius: 5px; background: #8b8b8b; }
.grid-scroll .track { flex: 129; }
.grid-scroll .thumb { flex: 198; margin-bottom: 8px; }
.count { margin-top: 6px; font-size: 12px; line-height: 14px; font-style: italic; }
.bottom { display: flex; justify-content: space-between; margin-top: 16px; padding-right: 4px; }
.bottom a { font-size: 15px; line-height: 34px; }
.buttons { display: flex; gap: 9px; }
.buttons button { height: 37px; border: 1px solid #2f51b5; border-radius: 6px; background: #fff; color: #2f51b5; font-weight: 700; font-size: 13px; padding: 0 14px 0 19px; }
.buttons button:disabled { border-color: #bbb; color: #bbb; }
.buttons .primary { background: #1f3383; color: #fff; border-color: #1f3383; }
.need-help { position: absolute; right: 0; top: 693px; width: 36px; height: 128px; border: 0; border-radius: 6px 0 0 6px; background: #486bc3; color: #fff; display: flex; flex-direction: column; align-items: center; gap: 9px; padding: 9px 0 0; font-size: 15px; font-weight: 900; }
.need-help span { writing-mode: vertical-rl; line-height: 18px; }
.footer { height: 33px; flex: none; border-top: 1px solid #aaa; display: flex; align-items: center; gap: 32px; padding: 0 14px 3px 27px; font-size: 11px; }
.footer a { display: flex; align-items: center; gap: 1px; }
.footer .line { text-decoration: underline; }
.footer span { margin-left: auto; color: #222; }
.page-scroll { width: 15px; padding: 6px 0 4px; display: flex; flex-direction: column; align-items: center; background: #fdfdfd; }
.page-scroll .track { flex: 207; }
.page-scroll .thumb { flex: 673; margin-bottom: 7px; }

/* Taskbar */
.taskbar { height: 48px; border-top: 1px solid #bbb; background: #eee; display: flex; align-items: center; font-size: 12px; line-height: 16px; position: relative; padding-bottom: 2px; }
.taskbar span { display: block; color: #555; }
.weather { display: flex; gap: 2px; padding-left: 20px; align-items: center; font-size: 11px; }
.weather text { font: 11px "Noto Sans", sans-serif; fill: #fff; }
.dock { position: absolute; left: 617px; display: flex; align-items: center; }
.find-app { width: 218px; height: 31px; margin-left: 13px; border: 1px solid #ddd; border-radius: 16px; background: #fbfbfb; display: flex; align-items: center; gap: 9px; padding: 0 10px; }
.find-app input { border: 0; outline: 0; background: none; width: 120px; padding: 0; font-size: 13px; }
.app-icons { display: flex; gap: 6px; margin-left: 6px; }
.app-icons button { width: 38px; height: 38px; position: relative; }
.app-icons .active { background: #fafafa; border-radius: 4px; }
.open::after { content: ""; position: absolute; bottom: 0; width: 6px; height: 3px; border-radius: 2px; background: #888; }
.open.active::after { width: 16px; background: #1c7fd0; }
.teams b { position: absolute; right: 2px; top: 2px; width: 14px; height: 14px; border-radius: 7px; background: #c42126; }
.tray { margin-left: auto; display: flex; align-items: center; padding-right: 19px; gap: 20px; }
.status-icons { display: flex; gap: 8px; align-items: center; }
.tray p { text-align: right; margin-left: -7px; }
.tray p span { color: #111; }
```
